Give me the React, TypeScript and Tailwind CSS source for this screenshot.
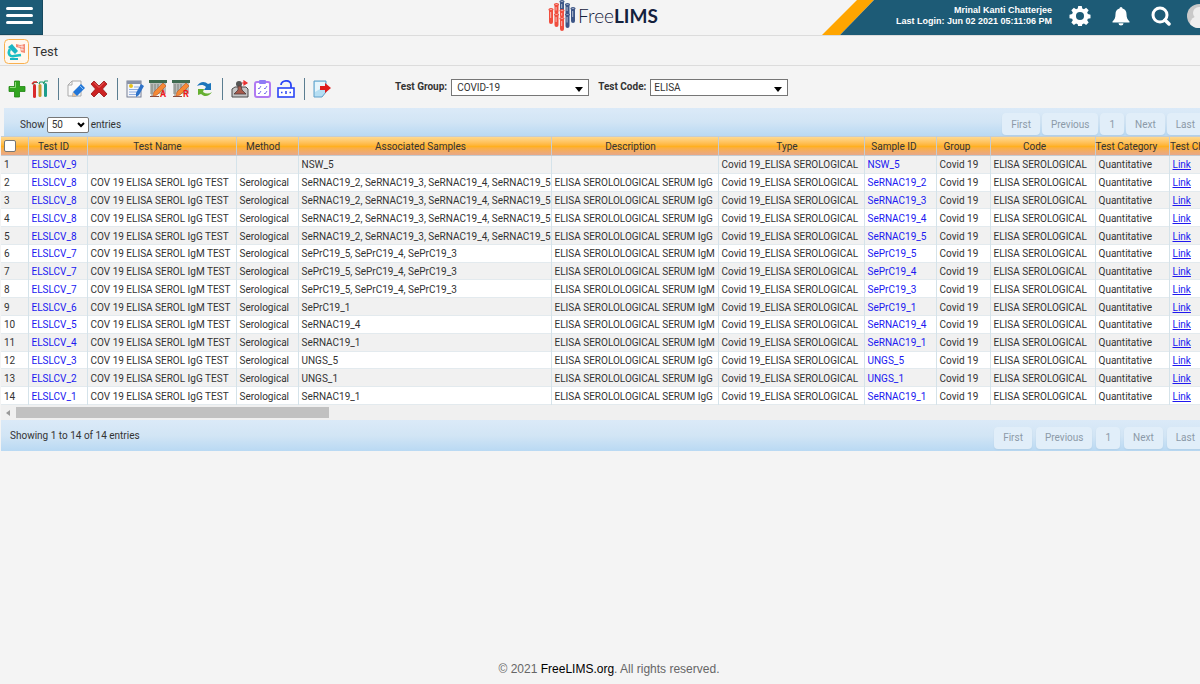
import type { ReactNode } from 'react';

const columns = [
  { title: 'Test ID', width: 'w-[59px]', pad: 'pr-2' },
  { title: 'Test Name', width: 'w-[149px]', pad: 'pr-2' },
  { title: 'Method', width: 'w-[62px]', pad: 'pr-2' },
  { title: 'Associated Samples', width: 'w-[253px]', pad: 'pr-2' },
  { title: 'Description', width: 'w-[167px]', pad: 'pr-2' },
  { title: 'Type', width: 'w-[146px]', pad: 'pr-2' },
  { title: 'Sample ID', width: 'w-[72px]', pad: 'pr-3' },
  { title: 'Group', width: 'w-[54px]', pad: 'pr-3' },
  { title: 'Code', width: 'w-[105px]', pad: 'pr-4' },
  { title: 'Test Category', width: 'w-[74px]', pad: 'pr-4' },
  { title: 'Test Chart', width: 'w-[64px]', pad: 'pr-4' },
];

const igg4 = 'SeRNAC19_2, SeRNAC19_3, SeRNAC19_4, SeRNAC19_5';
const igm3 = 'SePrC19_5, SePrC19_4, SePrC19_3';

// [test id, kind, associated samples, sample id]
const tests = [
  ['ELSLCV_9', '', 'NSW_5', 'NSW_5'],
  ['ELSLCV_8', 'IgG', igg4, 'SeRNAC19_2'],
  ['ELSLCV_8', 'IgG', igg4, 'SeRNAC19_3'],
  ['ELSLCV_8', 'IgG', igg4, 'SeRNAC19_4'],
  ['ELSLCV_8', 'IgG', igg4, 'SeRNAC19_5'],
  ['ELSLCV_7', 'IgM', igm3, 'SePrC19_5'],
  ['ELSLCV_7', 'IgM', igm3, 'SePrC19_4'],
  ['ELSLCV_7', 'IgM', igm3, 'SePrC19_3'],
  ['ELSLCV_6', 'IgM', 'SePrC19_1', 'SePrC19_1'],
  ['ELSLCV_5', 'IgM', 'SeRNAC19_4', 'SeRNAC19_4'],
  ['ELSLCV_4', 'IgM', 'SeRNAC19_1', 'SeRNAC19_1'],
  ['ELSLCV_3', 'IgG', 'UNGS_5', 'UNGS_5'],
  ['ELSLCV_2', 'IgG', 'UNGS_1', 'UNGS_1'],
  ['ELSLCV_1', 'IgG', 'SeRNAC19_1', 'SeRNAC19_1'],
];

type TubeProps = { x: number; y: number; h: number; color: string };

const Tube = ({ x, y, h, color }: TubeProps) => (
  <g>
    <rect x={x} y={y + 1} width="4" height={h - 1} rx="2" fill={color} />
    <ellipse cx={x + 2} cy={y + 1.5} rx="2.6" ry="1.5" fill={color} />
    <ellipse cx={x + 2} cy={y + 1.5} rx="1.4" ry="0.6" fill="#fff" opacity="0.5" />
    <rect x={x + 1} y={y + 4} width="1.2" height={h / 2 - 2} fill="#fff" opacity="0.5" />
  </g>
);

const Logo = () => (
  <a href="#home" className="flex items-center pb-[3px] pl-1.5 text-[#14213d]">
    <svg width="28" height="32" viewBox="0 0 28 32">
      <Tube x={12} y={0} h={12} color="#3d5687" />
      <Tube x={17.5} y={3} h={12} color="#3d5687" />
      <Tube x={17.5} y={13} h={15} color="#3d5687" />
      <Tube x={23} y={7} h={16} color="#3d5687" />
      <Tube x={6.5} y={3} h={11} color="#f04e3e" />
      <Tube x={6.5} y={13} h={14} color="#f04e3e" />
      <Tube x={1} y={8} h={16} color="#f04e3e" />
      <Tube x={12} y={9} h={9} color="#f04e3e" />
      <Tube x={12} y={17} h={14} color="#f04e3e" />
    </svg>
    <span className="ml-0.5 font-[Lato,sans-serif] text-[19px] leading-8 font-light">
      Free<b className="font-bold">LIMS</b>
    </span>
  </a>
);

const Header = () => (
  <header className="grid grid-cols-[1fr_auto_1fr] overflow-hidden border-b border-[#dcdcdc]">
    <button
      aria-label="Menu"
      className="flex h-[35px] w-[43px] flex-col gap-1 border-r border-b border-[#174a60] bg-[#1d5b76] px-1.5 pt-[7px]"
    >
      <span className="h-[3px] w-[27px] rounded-xs bg-white" />
      <span className="h-[3px] w-[27px] rounded-xs bg-white" />
      <span className="h-[3px] w-[27px] rounded-xs bg-white" />
    </button>
    <Logo />
    <div className="flex h-[35px] justify-end">
      <svg width="52" height="35" viewBox="0 0 52 35" className="shrink-0">
        <path d="M35 0H52L18 35H0Z" fill="#ffa500" />
        <path d="M52 0V35H18Z" fill="#1d5b76" />
      </svg>
      <div className="-mr-4 flex shrink-0 items-center bg-[#1d5b76] pl-[22px] text-white">
        <p className="pb-1 text-right font-[Liberation_Sans,sans-serif] text-[9px] leading-[11px] font-bold">
          Mrinal Kanti Chatterjee
          <br />
          Last Login: Jun 02 2021 05:11:06 PM
        </p>
        <button aria-label="Settings" className="ml-[17px] pb-1">
          <svg width="22" height="21" viewBox="0 0 24 24" fill="#fff">
            <path
              fillRule="evenodd"
              d="M10 1h4l.6 3 1.9.8 2.5-1.7 2.9 2.9-1.7 2.5.8 1.9 3 .6v4l-3 .6-.8 1.9 1.7 2.5-2.9 2.9-2.5-1.7-1.9.8-.6 3h-4l-.6-3-1.9-.8-2.5 1.7-2.9-2.9 1.7-2.5-.8-1.9-3-.6v-4l3-.6.8-1.9L2.1 6 5 3.1l2.5 1.7 1.9-.8zM12 8a4.6 4.6 0 1 0 0 9.2 4.6 4.6 0 0 0 0-9.2z"
            />
          </svg>
        </button>
        <button aria-label="Notifications" className="ml-5 pb-1">
          <svg width="20" height="20" viewBox="0 0 20 20" fill="#fff">
            <path d="M10 1a1.5 1.5 0 0 1 1.5 1.5c2.7.7 4 2.8 4 5.5 0 4 1 5.5 3 7.5v1h-17v-1c2-2 3-3.5 3-7.5 0-2.7 1.3-4.8 4-5.5A1.5 1.5 0 0 1 10 1zM7.5 17.3h5a2.5 2.2 0 0 1-5 0z" />
          </svg>
        </button>
        <button aria-label="Search" className="ml-5 pb-1">
          <svg width="20" height="20" viewBox="0 0 20 20" fill="none" stroke="#fff">
            <circle cx="9" cy="9" r="7" strokeWidth="3" />
            <path d="M14 14l4 4" strokeWidth="3.5" strokeLinecap="round" />
          </svg>
        </button>
        <button aria-label="Profile" className="ml-4 pb-1">
          <svg width="29" height="24" viewBox="0 0 29 24">
            <circle cx="12" cy="12" r="12" fill="#c9c9c9" />
            <circle cx="12" cy="9" r="6" fill="#eee" />
            <path d="M3 20a9 8 0 0 1 18 0 12 12 0 0 1-18 0z" fill="#eee" />
          </svg>
        </button>
      </div>
    </div>
  </header>
);

const PageTitle = () => (
  <div className="flex h-[30px] items-center gap-1 border-b border-[#dcdcdc] pt-0.5 pl-1">
    <svg width="25" height="25" viewBox="0 0 25 25">
      <rect x="0.5" y="0.5" width="24" height="24" rx="4" fill="#fff8ee" stroke="#f9b04f" />
      <path d="M4 8l4-3 6 7-3 3z" fill="#19b5c4" />
      <path d="M6 10c-3 5 0 8 4 7l7-1" fill="none" stroke="#19c0c4" strokeWidth="2.5" />
      <path d="M6 20h8" stroke="#19b5c4" strokeWidth="2" />
      <path d="M12 5l4 1 5-1v9l-4-1-1-4-4-1z" fill="#f58a73" />
      <path d="M14 7l6 1M16 10l4 1M18 5v7" stroke="#fff" strokeWidth="0.6" />
    </svg>
    <h1 className="text-[13px] leading-5">Test</h1>
  </div>
);

const Tool = ({ label, children }: { label: string; children: ReactNode }) => (
  <button aria-label={label} title={label}>
    <svg width="18" height="18" viewBox="0 0 18 18">
      {children}
    </svg>
  </button>
);

const Divider = () => <span className="mx-[3px] h-[22px] w-0.5 border-r border-[#5a7d90]" />;

const ChartEdit = ({ letter }: { letter: string }) => (
  <>
    <rect x="0" y="0" width="18" height="3" fill="#3f6b50" />
    <path d="M1 3h16v11H1z" fill="#b9bdb9" />
    <path d="M3 4v13M6 4v10M9 4v10M14 4v8" stroke="#7c807c" />
    <path d="M1 16.5h9" stroke="#8a4b3c" />
    <path d="M14 3l3 3-9 9-4 1 1-4z" fill="#f58a35" stroke="#c45720" strokeWidth="0.6" />
    <text x="11" y="17" fontSize="9" fontWeight="700" fill="#f01818">
      {letter}
    </text>
  </>
);

const Select = ({ id, value, pad }: { id: string; value: string; pad: string }) => (
  <div className="relative">
    <select
      id={id}
      className={`${pad} block h-[17px] w-[138px] appearance-none border border-[#767676] bg-white text-[10px] leading-[15px]`}
    >
      <option>{value}</option>
    </select>
    <svg width="8" height="5" viewBox="0 0 8 5" className="pointer-events-none absolute right-1.5 bottom-1">
      <path d="M0 0h8L4 5z" fill="#000" />
    </svg>
  </div>
);

const Toolbar = () => (
  <div className="flex h-[42px] items-center pl-2">
    <div className="flex w-[387px] items-center gap-[5px] pt-1">
      <Tool label="Add">
        <path d="M6.5 1h5v5.5H17v5h-5.5V17h-5v-5.5H1v-5h5.5z" fill="#31a51f" stroke="#1f8512" strokeWidth="0.8" />
        <path d="M7.5 2v5.5H2" fill="none" stroke="#8fdc7c" />
      </Tool>
      <Tool label="Samples">
        <rect x="2" y="4" width="3" height="14" rx="1.5" fill="#d92b2b" />
        <rect x="7.5" y="4" width="3" height="13" rx="1.5" fill="#c79b2e" />
        <rect x="13" y="3" width="3" height="14" rx="1.5" fill="#1d9d8b" />
        <path d="M2 4.5l1-2h4M8 4l1-2h3l1 2M13 3l1-2h3" fill="none" stroke="#1d9d6b" strokeWidth="1.2" />
        <path d="M1 4l2-2h3" fill="none" stroke="#d92b2b" strokeWidth="1.5" />
      </Tool>
      <Divider />
      <Tool label="Edit">
        <path d="M5 1h9v15H1V5z" fill="#fafafa" stroke="#aaa" />
        <path d="M5 1v4H1" fill="none" stroke="#aaa" />
        <path d="M14 4l4 4-8 8-5 1 1-5z" fill="#2377d8" />
        <path d="M6 12l4 4-5 1z" fill="#e9c39b" />
        <path d="M12.5 5.5l4 4" stroke="#8fc2f5" />
      </Tool>
      <Tool label="Delete">
        <path d="M4 1l5 5 5-5 3 3-4.5 5 4.5 5-3 3-5-5-5 5-3-3 4.5-5L1 4z" fill="#cc2222" stroke="#961414" strokeWidth="0.8" />
        <path d="M4 2.5l5 5 5-5" fill="none" stroke="#ef7a7a" strokeWidth="0.8" />
      </Tool>
      <Divider />
      <Tool label="Notes">
        <rect x="1" y="1" width="14" height="16" fill="#f4f6fb" stroke="#777f94" />
        <rect x="1" y="1" width="14" height="3" fill="#8a93a8" />
        <circle cx="5" cy="6" r="2" fill="#e8c21b" />
        <path d="M3 9.5h9M3 12h8M3 14.5h7M8 7h5" stroke="#8fade0" />
        <path d="M15 4l3 2-5 9-3 2v-4z" fill="#2d72c9" />
      </Tool>
      <Tool label="Edit analysis">
        <ChartEdit letter="A" />
      </Tool>
      <Tool label="Edit result">
        <ChartEdit letter="R" />
      </Tool>
      <Tool label="Refresh">
        <path d="M2 6c3-5 8-5 11-2l3-1v7H9l2-3C8 4 5 5 2 6z" fill="#1b75bb" />
        <path d="M17 12c-3 5-8 5-11 2l-3 1V9h6l-1 3c3 2 6 2 9 0z" fill="#66b032" />
      </Tool>
      <Divider />
      <Tool label="Approve">
        <path d="M1 9l3-2h11l2 2v8H1z" fill="#c5c5c5" stroke="#4b4b4b" />
        <circle cx="8" cy="4" r="3" fill="#555" />
        <path d="M7 6h3l1 4 4 4H3l4-4z" fill="#a85a4b" stroke="#4b3c3c" strokeWidth="0.8" />
        <path d="M11 3h4M13 1l3 2-3 2z" stroke="#e33" strokeWidth="1.2" />
      </Tool>
      <Tool label="Checklist">
        <rect x="1" y="2" width="15" height="15" rx="2" fill="#fff" stroke="#b07af2" strokeWidth="2" />
        <rect x="5" y="0" width="7" height="4" rx="1" fill="#8f7cf5" />
        <path d="M4 8l1 1 2-3M10 8l1 1 2-3M4 13l1 1 2-3M10 13l1 1 2-3" fill="none" stroke="#7d74ee" />
      </Tool>
      <Tool label="Unlock">
        <rect x="1" y="8" width="16" height="9" fill="#fff" stroke="#2a45f5" strokeWidth="1.6" />
        <path d="M4 5C4 0 14-1 14 5v3" fill="none" stroke="#2a45f5" strokeWidth="1.8" />
        <path d="M9 11v3M4 12.5h1.5M12.5 12.5H14" stroke="#2a45f5" strokeWidth="1.5" />
      </Tool>
      <Divider />
      <Tool label="Export">
        <path d="M1 1h12v11l-4 5H1z" fill="#b5def3" stroke="#5e9fc9" />
        <path d="M2 2h10v4L2 12z" fill="#e6f5fc" />
        <path d="M7 6h5V3l6 5-6 5v-3H7z" fill="#e01b1b" />
      </Tool>
    </div>
    <div className="flex items-center gap-1 text-[10px] leading-4">
      <label htmlFor="group" className="font-bold">
        Test Group:
      </label>
      <Select id="group" value="COVID-19" pad="pl-[5px]" />
      <label htmlFor="code" className="ml-[5px] font-bold">
        Test Code:
      </label>
      <Select id="code" value="ELISA" pad="pl-[3px]" />
    </div>
  </div>
);

const Pagination = ({ label, className }: { label: string; className: string }) => (
  <nav aria-label={label} className={`flex shrink-0 text-[#8c9aa8] ${className}`}>
    {['First', 'Previous', '1', 'Next', 'Last'].map((page) => (
      <button key={page} className="h-[22px] rounded-sm bg-[#e1eef9] px-[9px] pt-px shadow-xs">
        {page}
      </button>
    ))}
  </nav>
);

const bar = 'flex overflow-hidden bg-linear-to-b from-[#dbeaf8] via-[#d2e5f5] to-[#b9d9f3]';
const cell = 'border-r border-[#d5e3ea] pt-px pr-0 pb-0 pl-[3px]';
const link = 'text-[#2018f0]';

const TestTable = () => (
  <div className="overflow-hidden">
    <table className="h-[269px] w-full min-w-[1232px] table-fixed border-collapse leading-[15px] whitespace-nowrap">
      <thead>
        <tr className="h-[19px] bg-linear-to-b from-[#fed98f] via-[#ffb01f] to-[#e5a78f]">
          <th className="w-[27px] border-y border-r border-[#c5ccd2] p-0 pl-[3px]">
            <input
              type="checkbox"
              aria-label="Select all"
              className="block size-3 appearance-none rounded-xs border border-[#767676] bg-white"
            />
          </th>
          {columns.map(({ title, width, pad }) => (
            <th
              key={title}
              className={`${width} ${pad} border-y border-r border-[#c5ccd2] py-0 text-center font-normal`}
            >
              {title}
            </th>
          ))}
        </tr>
      </thead>
      <tbody>
        {tests.map(([id, kind, associated, sample], i) => (
          <tr key={i} className="border-b border-[#e3eaee] odd:bg-[#f1f1f1] even:bg-white">
            <td className={cell}>{i + 1}</td>
            <td className={cell}>
              <a href="#test" className={link}>
                {id}
              </a>
            </td>
            <td className={cell}>{kind && `COV 19 ELISA SEROL ${kind} TEST`}</td>
            <td className={cell}>{kind && 'Serological'}</td>
            <td className={cell}>{associated}</td>
            <td className={cell}>{kind && `ELISA SEROLOLOGICAL SERUM ${kind}`}</td>
            <td className={cell}>Covid 19_ELISA SEROLOGICAL</td>
            <td className={cell}>
              <a href="#sample" className={link}>
                {sample}
              </a>
            </td>
            <td className={cell}>Covid 19</td>
            <td className={cell}>ELISA SEROLOGICAL</td>
            <td className={cell}>Quantitative</td>
            <td className={cell}>
              <a href="#chart" className={`${link} underline`}>
                Link
              </a>
            </td>
          </tr>
        ))}
      </tbody>
    </table>
  </div>
);

const App = () => (
  <div className="flex min-h-screen flex-col overflow-hidden bg-[#f4f4f4] font-[Roboto,sans-serif] text-[10px] leading-4 text-[#333]">
    <Header />
    <PageTitle />
    <Toolbar />
    <main className="pl-px">
      <div className={`${bar} ml-[3px] h-7 justify-between pt-[5px] pl-4`}>
        <div className="flex h-6 items-center gap-0.5">
          <label htmlFor="length">Show</label>
          <div className="relative">
            <select
              id="length"
              className="block h-4 w-[42px] appearance-none rounded-xs border border-[#767676] bg-white pl-1 text-[10px] leading-[14px]"
            >
              <option>50</option>
            </select>
            <svg
              width="8"
              height="6"
              viewBox="0 0 8 6"
              className="pointer-events-none absolute top-[5px] right-1"
            >
              <path d="M1 1l3 3 3-3" fill="none" stroke="#000" strokeWidth="2" />
            </svg>
          </div>
          entries
        </div>
        <Pagination label="Pages above the table" className="-mr-1 gap-0.5" />
      </div>
      <TestTable />
      <div className="flex h-[15px] items-center bg-[#f0f0f0] pl-[5px]">
        <svg width="4" height="6" viewBox="0 0 4 6">
          <path d="M4 0v6L0 3z" fill="#999" />
        </svg>
        <div className="ml-1.5 h-[11px] w-[313px] bg-[#c1c1c1]" />
      </div>
      <div className={`${bar} h-[31px] items-center justify-between pl-[9px]`}>
        <p>Showing 1 to 14 of 14 entries</p>
        <Pagination label="Pages below the table" className="-mr-1 gap-1 pt-1" />
      </div>
    </main>
    <footer className="mt-auto pb-1.5 pl-[18px] text-center font-[Liberation_Sans,sans-serif] text-xs leading-[18px] text-[#666]">
      © 2021{' '}
      <a href="#org" className="text-black">
        FreeLIMS.org
      </a>
      . All rights reserved.
    </footer>
  </div>
);

export default App;
